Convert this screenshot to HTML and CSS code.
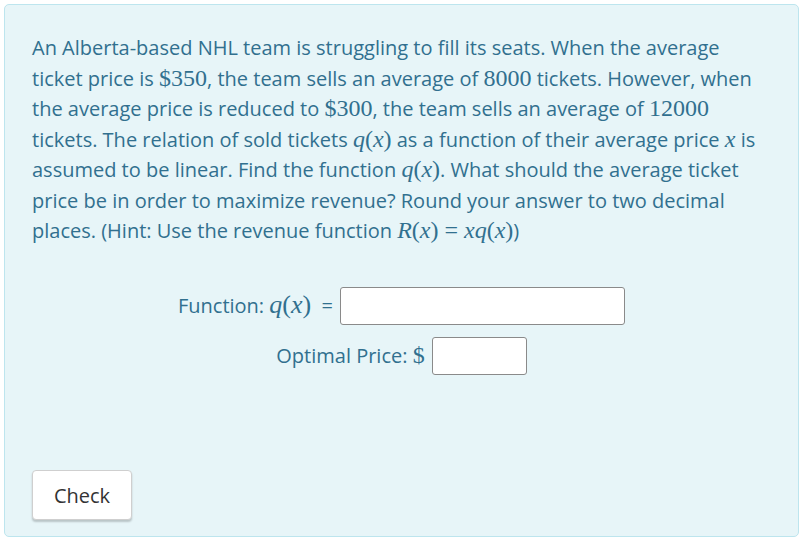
FILE: index.html
```html
<!DOCTYPE html>
<html>
<head>
<meta charset="utf-8">
<link rel="stylesheet" href="styles.css">
</head>
<body>
<div class="panel">
  <p class="question">An Alberta-based NHL team is struggling to fill its seats. When the average ticket price is <span class="m">$350</span>, the team sells an average of <span class="m">8000</span> tickets. However, when the average price is reduced to <span class="m">$300</span>, the team sells an average of <span class="m">12000</span> tickets. The relation of sold tickets <span class="m"><i>q</i>(<i>x</i>)</span> as a function of their average price <span class="m"><i>x</i></span> is assumed to be linear. Find the function <span class="m"><i>q</i>(<i>x</i>)</span>. What should the average ticket price be in order to maximize revenue? Round your answer to two decimal places. (Hint: Use the revenue function <span class="m"><i>R</i>(<i>x</i>) = <i>xq</i>(<i>x</i>)</span>)</p>
  <div class="form">
    <div class="row">
      <label class="lbl">Function: <span class="m big"><i>q</i>(<i>x</i>)</span>&nbsp; =</label>
      <input class="field wide" type="text">
    </div>
    <div class="row">
      <label class="lbl">Optimal Price: <span class="m">$</span></label>
      <input class="field narrow" type="text">
    </div>
  </div>
  <div class="actions">
    <button class="btn" type="button">Check</button>
  </div>
</div>
</body>
</html>
```
FILE: styles.css
```css
html, body {
  margin: 0;
  padding: 0;
  background: #ffffff;
}
body {
  padding: 4px 3px 4px 4px;
  font-family: "Open Sans", "Noto Sans", sans-serif;
}
.panel {
  box-sizing: border-box;
  height: 533px;
  border: 1px solid #bde5ee;
  border-radius: 5px;
  background: #e7f5f8;
  color: #31708f;
  padding: 28px 27px 16px 27px;
  display: flex;
  flex-direction: column;
}
.question {
  margin: 0;
  font-size: 20px;
  line-height: 30.5px;
}
.m {
  font-family: "Liberation Serif", "DejaVu Serif", serif;
  font-size: 1.2em;
  line-height: 20px;
}
.big {
  font-size: 1.3em;
}
.form {
  margin-top: 40px;
  display: flex;
  flex-direction: column;
  align-items: center;
  gap: 12px;
}
.row {
  display: flex;
  align-items: center;
  gap: 7px;
}
.lbl {
  font-size: 20px;
}
.field {
  box-sizing: border-box;
  height: 38px;
  border: 1px solid #8a8a8a;
  border-radius: 3px;
  background: #fff;
  padding: 0 6px;
}
.wide { width: 285px; }
.narrow { width: 95px; }
.actions {
  margin-top: auto;
}
.btn {
  width: 100px;
  height: 50px;
  background: #fff;
  border: 1px solid #cfcfcf;
  border-radius: 4px;
  box-shadow: 0 2px 2px rgba(0,0,0,0.2);
  font-family: "Open Sans", "Noto Sans", sans-serif;
  font-size: 20px;
  color: #333;
}
```
